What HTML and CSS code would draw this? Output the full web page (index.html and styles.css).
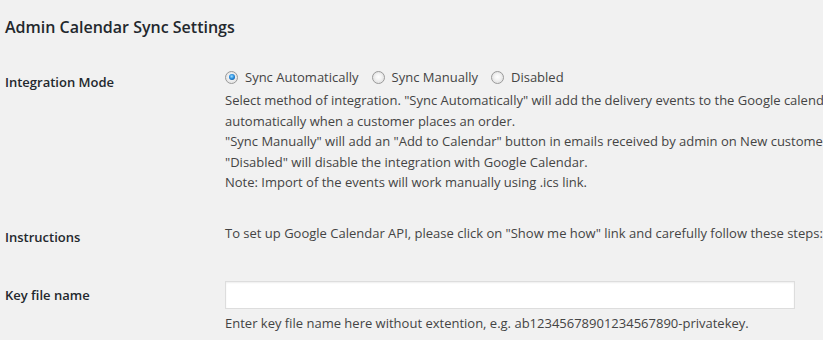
FILE: index.html
```html
<!DOCTYPE html>
<html>
<head>
<meta charset="utf-8">
<link rel="stylesheet" href="styles.css">
</head>
<body>
<div class="wrap">
  <h2 class="title">Admin Calendar Sync Settings</h2>
  <table class="form-table">
    <tr>
      <th>Integration Mode</th>
      <td>
        <div class="radios">
          <label class="radio"><span class="dot checked"></span>Sync Automatically</label>
          <label class="radio"><span class="dot"></span>Sync Manually</label>
          <label class="radio"><span class="dot"></span>Disabled</label>
        </div>
        <p class="description">Select method of integration. "Sync Automatically" will add the delivery events to the Google calendar, which is set in the "Calendar to be used" field,<br>automatically when a customer places an order.<br>"Sync Manually" will add an "Add to Calendar" button in emails received by admin on New customer order.<br>"Disabled" will disable the integration with Google Calendar.<br>Note: Import of the events will work manually using .ics link.</p>
      </td>
    </tr>
    <tr>
      <th>Instructions</th>
      <td><p class="plain">To set up Google Calendar API, please click on "Show me how" link and carefully follow these steps: Show me how</p></td>
    </tr>
    <tr>
      <th>Key file name</th>
      <td>
        <input type="text" class="text-input">
        <p class="description">Enter key file name here without extention, e.g. ab12345678901234567890-privatekey.</p>
      </td>
    </tr>
  </table>
</div>
</body>
</html>
```

FILE: styles.css
```css
html, body {
  margin: 0;
  padding: 0;
  background: #f1f1f1;
  overflow: hidden;
}
body {
  font-family: "Open Sans", "Noto Sans", sans-serif;
  font-size: 13px;
  color: #444;
  width: 1400px;
}
.wrap {
  padding-left: 5px;
}
.title {
  margin: 0;
  padding-top: 16px;
  font-size: 16px;
  line-height: 22px;
  font-weight: 600;
  color: #23282d;
  height: 37px;
}
.form-table {
  border-collapse: collapse;
}
.form-table th {
  width: 200px;
  padding: 20px 10px 20px 0;
  text-align: left;
  vertical-align: top;
  font-weight: 600;
  color: #23282d;
  line-height: 18px;
  font-size: 13px;
}
.form-table td {
  padding: 15px 10px;
  vertical-align: top;
  line-height: 20px;
  white-space: nowrap;
}
.radios {
  display: flex;
  gap: 13px;
  line-height: 18px;
}
.radio {
  display: flex;
  align-items: center;
  gap: 7px;
}
.dot {
  width: 13px;
  height: 13px;
  border-radius: 50%;
  border: 1px solid #9a9a9a;
  background: radial-gradient(circle at 50% 45%, #ffffff 0, #f4f4f4 35%, #d6d6d6 100%);
  box-shadow: inset 0 0 0 1px #e8e8e8;
  box-sizing: border-box;
  position: relative;
}
.dot.checked::after {
  content: "";
  position: absolute;
  left: 2.5px;
  top: 2.5px;
  width: 6px;
  height: 6px;
  border-radius: 50%;
  background: radial-gradient(circle at 45% 40%, #9fe0ff 0, #2a8fe0 45%, #0a4f95 85%, #083a6e 100%);
}
.description {
  margin: 4px 0 0;
  line-height: 20.5px;
}
.plain {
  margin: 0;
  line-height: 21px;
}
.text-input {
  display: block;
  width: 570px;
  height: 28px;
  box-sizing: border-box;
  border: 1px solid #ddd;
  box-shadow: inset 0 1px 2px rgba(0,0,0,0.07);
  background: #fff;
  margin: 0;
  padding: 3px 5px;
}
```
